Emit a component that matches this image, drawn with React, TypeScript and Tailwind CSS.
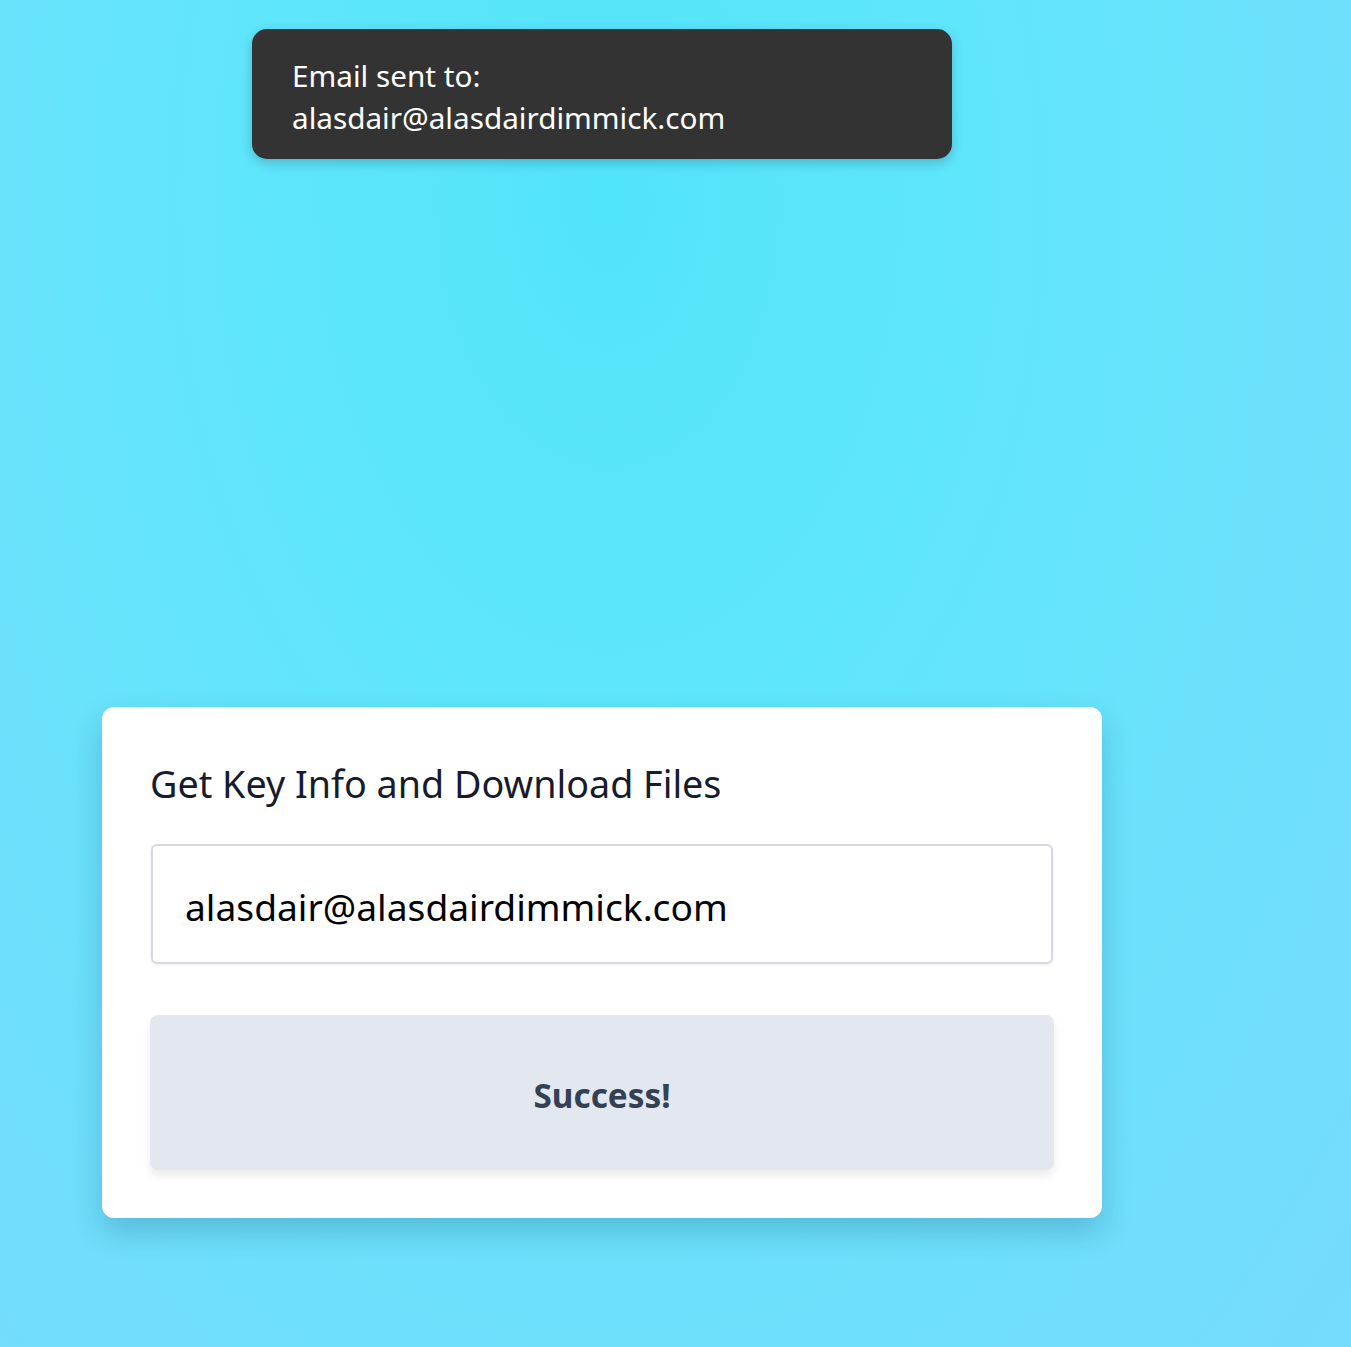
import React from "react";

export default function App() {
  return (
    <div
      className="relative w-full h-[1347px] overflow-hidden bg-[radial-gradient(ellipse_farthest-corner_at_45%_15%,#52e4fb_0%,#5fe6fc_35%,#6ae2fc_60%,#76dafd_100%)]"
      style={{ fontFamily: '"Noto Sans", "Open Sans", sans-serif' }}
    >
      {/* Toast */}
      <div className="absolute left-[252px] top-[29px] w-[700px] h-[130px] rounded-[15px] bg-[#333333] shadow-[0_4px_12px_rgba(0,0,0,0.2)] pl-10 pt-[26px] text-white text-[29.7px] leading-[42px]">
        <div>Email sent to:</div>
        <div>alasdair@alasdairdimmick.com</div>
      </div>

      {/* Card */}
      <div className="pt-[707px] pl-[102px]">
        <div className="w-[1000px] rounded-xl bg-white p-12 shadow-[0_14px_30px_rgba(0,60,90,0.22)]">
          <h2 className="text-[37.7px] leading-[57px] text-[#161b2e] font-normal mb-8">
            Get Key Info and Download Files
          </h2>
          <div className="ml-px w-[902px] h-[120px] rounded-md border-2 border-[#d6d8e0] shadow-[0_1px_3px_rgba(0,0,0,0.08)] flex items-center px-8 pt-[6px]">
            <span className="text-[37.2px] text-black">alasdair@alasdairdimmick.com</span>
          </div>
          <div className="mt-[51px] h-[155px] rounded-lg bg-[#e2e7f0] shadow-[0_6px_10px_rgba(0,0,0,0.08)] flex items-center justify-center pt-[6px]">
            <span className="text-[33.3px] font-bold text-[#344054]">Success!</span>
          </div>
        </div>
      </div>
    </div>
  );
}
